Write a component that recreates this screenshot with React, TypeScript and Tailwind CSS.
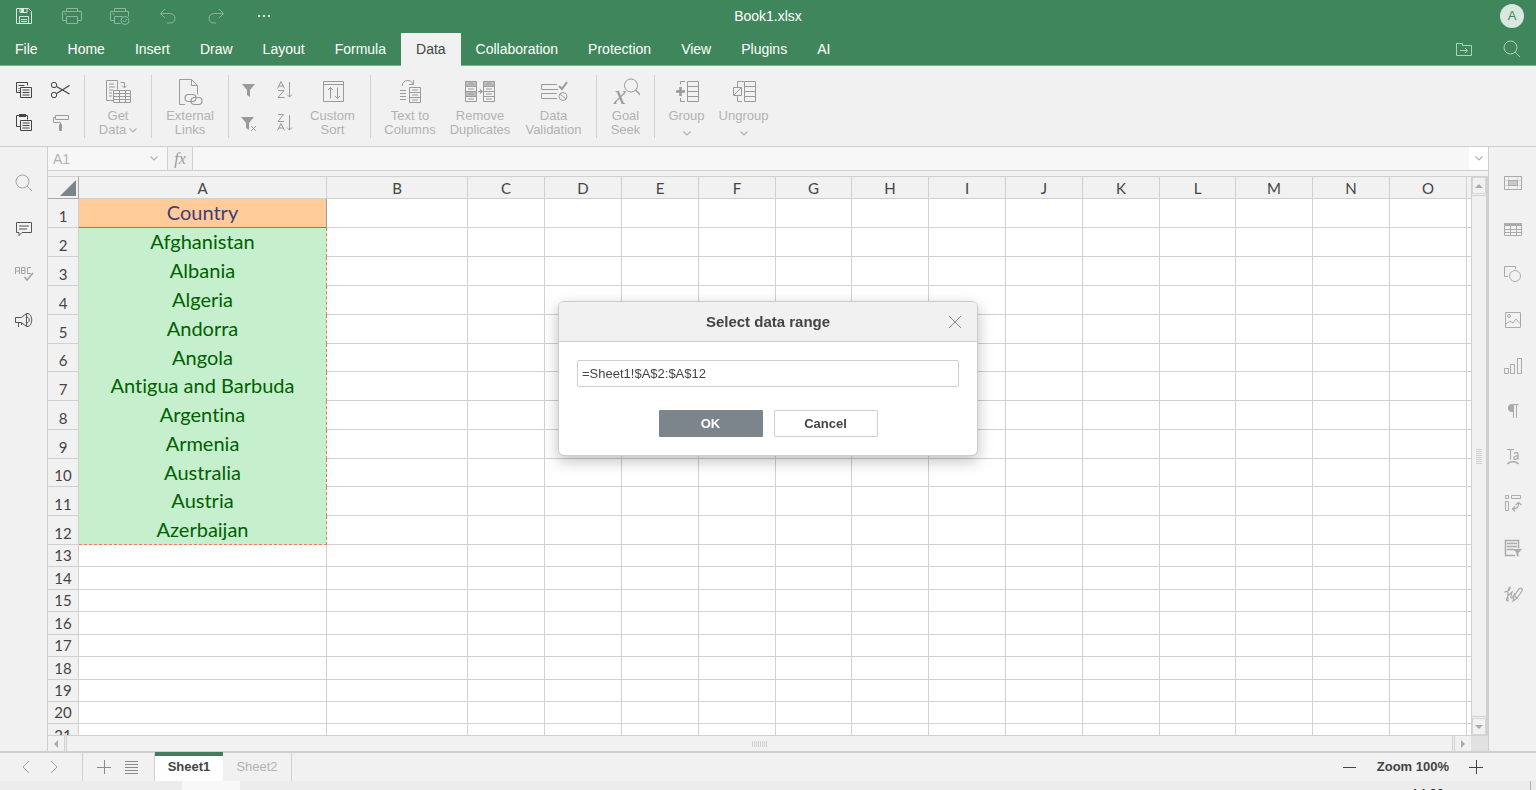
import type { ReactNode } from "react";

const menuTabs = ["File", "Home", "Insert", "Draw", "Layout", "Formula", "Data", "Collaboration", "Protection", "View", "Plugins", "AI"];

const columns = [
  { name: "A", width: "w-[248px]" },
  { name: "B", width: "w-[141px]" },
  { name: "C", width: "w-[77px]" },
  { name: "D", width: "w-[77px]" },
  { name: "E", width: "w-[77px]" },
  { name: "F", width: "w-[77px]" },
  { name: "G", width: "w-[76px]" },
  { name: "H", width: "w-[77px]" },
  { name: "I", width: "w-[77px]" },
  { name: "J", width: "w-[77px]" },
  { name: "K", width: "w-[77px]" },
  { name: "L", width: "w-[76px]" },
  { name: "M", width: "w-[77px]" },
  { name: "N", width: "w-[77px]" },
  { name: "O", width: "w-[77px]" },
];

const countries = [
  "Country", "Afghanistan", "Albania", "Algeria", "Andorra", "Angola",
  "Antigua and Barbuda", "Argentina", "Armenia", "Australia", "Austria", "Azerbaijan",
];

const rowHeights = [
  "h-[29px]", "h-[29px]", "h-[29px]", "h-[29px]", "h-[29px]", "h-[28px]",
  "h-[29px]", "h-[29px]", "h-[29px]", "h-[28px]", "h-[29px]", "h-[29px]",
  "h-[22px]", "h-[23px]", "h-[22px]", "h-[23px]", "h-[22px]", "h-[23px]", "h-[22px]", "h-[22px]", "h-[23px]",
];

function Icon({ w = 20, h = 20, children }: { w?: number; h?: number; children: ReactNode }) {
  return (
    <svg width={w} height={h} viewBox={`0 0 ${w} ${h}`} fill="none" stroke="currentColor" strokeWidth="1" aria-hidden="true" className="shrink-0">
      {children}
    </svg>
  );
}

const SaveIcon = () => (
  <Icon>
    <path d="M2.500 2.500h12l3 3v12h-15z" />
    <path d="M6 2.500v4h7v-4M5.500 17.500v-7h9v7M7 13.500h6M7 15.500h6" />
    <path d="M7 3h3v3H7z" fill="currentColor" stroke="none" />
  </Icon>
);

const PrintIcon = () => (
  <Icon>
    <path d="M4.500 5.500v-3h11v3M4.500 14.500h-4v-9h19v9h-4" />
    <path d="M4.500 10.500h11v7h-11zM2.500 8h2" />
  </Icon>
);

const QuickPrintIcon = () => (
  <Icon>
    <path d="M4.500 5.500v-3h11v3M4.500 14.500h-4v-9h18v5M4.500 10.500h8M10.500 17.500h-6v-7M2.500 8h2" />
    <circle cx="15" cy="14.500" r="4" />
    <path d="m13 14.500 1.500 1.500 2.500-3" />
  </Icon>
);

const UndoIcon = () => (
  <Icon>
    <path d="M7 3 2.500 7.500 7 12M3 7.500h8.500c3.500 0 5.500 2 5.500 5s-2 4.500-5 4.500H9" />
  </Icon>
);

const RedoIcon = () => (
  <Icon>
    <path d="m13 3 4.500 4.500L13 12m4-4.500H8.500C5 7.500 3 9.500 3 12.500S5 17 8 17h2" />
  </Icon>
);

const MoreIcon = () => (
  <Icon>
    <path d="M4 9h2v2H4zM9 9h2v2H9zM14 9h2v2h-2z" fill="currentColor" stroke="none" />
  </Icon>
);

const FolderIcon = () => (
  <Icon>
    <path d="M2.500 4.500h6v2h9v10h-15zM6 11.500h7.500M11 9l2.500 2.500L11 14" />
  </Icon>
);

const SearchIcon = () => (
  <Icon>
    <circle cx="8.500" cy="8.500" r="6.500" />
    <path d="m13 13 5 5" />
  </Icon>
);

const CopyIcon = () => (
  <Icon>
    <path d="M6 12.500H2.500v-10h11v3M4.500 5.500h6M4.500 8.500h1M4.500 10.500h1" />
    <path d="M6.500 7.500h11v10h-11zM8.500 10h7M8.500 12.500h7M8.500 15h7" />
  </Icon>
);

const PasteIcon = () => (
  <Icon>
    <path d="M6 13.500H2.500v-11h11v4" />
    <path d="M5 1h7v3H5z" fill="currentColor" stroke="none" />
    <path d="M6.500 7.500h11v10h-11zM8.500 10h7M8.500 12.500h7M8.500 15h7" />
  </Icon>
);

const CutIcon = () => (
  <Icon>
    <circle cx="4" cy="5" r="2.700" />
    <circle cx="4" cy="15" r="2.700" />
    <path d="M6.500 6.500 19.500 14M6.500 13.500 19.500 5.500" strokeWidth="1.200" />
  </Icon>
);

const FormatPainterIcon = () => (
  <Icon>
    <path d="M5.500 2.500h13v4h-13zM5.500 4.500h-2v5h7v3" />
    <path d="M9.500 11.500h2v6h-2z" fill="currentColor" />
  </Icon>
);

const FunnelIcon = () => (
  <Icon>
    <path d="M3 4h13l-5 6v7l-3-2v-5z" fill="currentColor" stroke="none" />
  </Icon>
);

const ClearFunnelIcon = () => (
  <Icon>
    <path d="M2 4h13l-5 6v7l-3-2v-5z" fill="currentColor" stroke="none" />
    <path d="m12 13 5 5m0-5-5 5" />
  </Icon>
);

const SortIcon = ({ desc = false }: { desc?: boolean }) => (
  <Icon>
    {desc ? (
      <path d="M3 1.500h5.500l-5.500 7h6M2.500 17.500l3.500-7 3.500 7M3.500 15h5" />
    ) : (
      <path d="m2.500 8.500 3.500-7 3.500 7M3.500 6h5M3 10.500h6l-6 7h6.500" />
    )}
    <path d="M14.500 2v15M12 14.500l2.500 2.500 2.500-2.500" />
  </Icon>
);

const GetDataIcon = () => (
  <Icon w={28} h={28}>
    <path d="M9 22.500H2.500v-20h11v9M5 6h5M5 9h6M5 12h4M5 15h3M5 18h3M16.500 4.500h4v5M18 7.500l2.500 2.500L23 7.500" />
    <path d="M9.500 12.500h17v12h-17zM9.500 15.500h17M9.500 18.500h17M9.500 21.500h17M15.500 12.500v12M21.500 12.500v12" />
  </Icon>
);

const LinksIcon = () => (
  <Icon w={28} h={28}>
    <path d="M9 26.500H3.500v-25h12l6 6v9M15.500 1.500v6h6" />
    <rect x="9" y="16.500" width="11" height="7" rx="3.500" strokeWidth="1.200" />
    <rect x="15" y="19.500" width="11" height="7" rx="3.500" strokeWidth="1.200" />
  </Icon>
);

const CustomSortIcon = () => (
  <Icon w={28} h={28}>
    <path d="M4.500 3.500h20v20h-20zM4.500 6.500h20M11.500 20.500v-11M9 12l2.500-2.500L14 12M18.500 9.500v11M16 18l2.500 2.500L21 18" />
  </Icon>
);

const TextColumnsIcon = () => (
  <Icon w={28} h={28}>
    <path d="M6 8c1-7 9-7 11-2M17.500 2v4.500H13" />
    <path d="M4 12.500h6M4 15.500h6M4 18.500h6M4 21.500h6" />
    <path d="M13.500 9.500h11v15h-11zM13.500 14.500h11M13.500 19.500h11M16 12h6M16 17h6M16 22h6" />
  </Icon>
);

const DuplicatesIcon = () => (
  <Icon w={30} h={28}>
    <path d="M.500 3.500h11v5H.500zM.500 13.500h11v5H.500zM18.500 3.500h11v5h-11z" fill="#bdbdbd" />
    <path d="M.500 8.500h11v5H.500zM.500 18.500h11v5H.500zM18.500 8.500h11v15h-11zM18.500 13.500h11M18.500 18.500h11M3 6h6M3 11h6M3 16h6M3 21h6M21 6h6M21 11h6M21 16h6M21 21h6" />
    <path d="M13 13.500h4M15 11.500l2 2-2 2" strokeWidth="1.200" />
  </Icon>
);

const ValidationIcon = () => (
  <Icon w={28} h={28}>
    <path d="M17 6.500H1.500v5H18M17 15.500H1.500v5H17" />
    <path d="m19 8 3 3 5-7" strokeWidth="2" />
    <circle cx="23" cy="18.500" r="4" />
    <path d="m20 16 6 5" />
  </Icon>
);

const GoalSeekIcon = () => (
  <Icon w={28} h={28}>
    <circle cx="19" cy="7.500" r="6.500" />
    <path d="m23.500 12 5 5" strokeWidth="1.500" />
    <text x="2" y="26" fontSize="27" fontStyle="italic" fontFamily="Liberation Serif" fill="currentColor" stroke="none">x</text>
  </Icon>
);

const GroupIcon = () => (
  <Icon w={28} h={28}>
    <path d="M14.500 3.500h11v20h-11zM14.500 8.500h11M14.500 13.500h11M14.500 18.500h11M12 3.500H7.500v3M7.500 20v3.500H12" />
    <path d="M3 13.500h9M7.500 9v9" strokeWidth="2.500" />
  </Icon>
);

const UngroupIcon = () => (
  <Icon w={28} h={28}>
    <path d="M14.500 3.500h11v20h-11zM14.500 8.500h11M14.500 13.500h11M14.500 18.500h11M14 3.500H7.500v5.500M7.500 18v5.500H12M3.500 9.500h8v8h-8zM4 17l7-7" />
  </Icon>
);

const Chevron = () => (
  <svg width="8" height="5" viewBox="0 0 8 5" fill="none" stroke="currentColor" strokeWidth="1.200" aria-hidden="true" className="shrink-0">
    <path d="m.500.500 3.500 3.500L7.500.500" />
  </svg>
);

const leftPanel = [
  { label: "Find", tone: "text-[#a3a3a3]", icon: <SearchIcon /> },
  {
    label: "Comments",
    tone: "text-[#555555]",
    icon: <Icon><path d="M2.500 3.500h15v10H8l-3 3v-3H2.500zM5 7h10M5 10h8" /></Icon>,
  },
  {
    label: "Spell checking",
    tone: "text-[#a3a3a3]",
    icon: (
      <Icon>
        <path d="M1.500 10V3.500h4V10M1.500 7h4M7.500 3.500h3.500v6H7.500zM7.500 6.500H11M17 3.500h-3.500v6H17" />
        <path d="m10.500 13 2.500 3 6-7" strokeWidth="1.500" />
      </Icon>
    ),
  },
  {
    label: "Feedback",
    tone: "text-[#555555]",
    icon: (
      <Icon>
        <path d="M1.500 7.500h6l5-4v13l-5-4h-6zM4.500 13v4M7.500 13v2M12.500 3.500c7-1 7 14 0 13M13 7c3 1 3 5 0 6" />
      </Icon>
    ),
  },
];

const rightPanel = [
  {
    label: "Cell settings",
    icon: (
      <Icon>
        <path d="M1.500 3.500h17v13h-17zM5.500 3.500v13M14.500 3.500v13M1.500 7.500h17M1.500 12.500h17" opacity=".4" />
        <path d="M1.500 3.500h17v13h-17z" />
        <path d="M5.500 7.500h9v5h-9z" fill="#c8c8c8" />
      </Icon>
    ),
  },
  {
    label: "Table settings",
    icon: (
      <Icon>
        <path d="M1.500 4.500h17v12h-17zM1.500 10.500h17M1.500 13.500h17M7.500 6v10.500M13.500 6v10.500" />
        <path d="M1 4h18v3H1z" fill="currentColor" stroke="none" />
      </Icon>
    ),
  },
  {
    label: "Shape settings",
    icon: <Icon><path d="M5 12.500H1.500v-10h11V5" /><circle cx="12" cy="12" r="5.500" /></Icon>,
  },
  {
    label: "Image settings",
    icon: <Icon><path d="M2.500 2.500h15v15h-15zM3 14l4-3 3 2 3-4 4 4.500" /><circle cx="6" cy="6" r="1.500" /></Icon>,
  },
  {
    label: "Chart settings",
    icon: <Icon><path d="M1.500 12.500h4v5h-4zM7.500 8.500h4v9h-4zM14.500 2.500h4v15h-4z" /></Icon>,
  },
  {
    label: "Paragraph settings",
    icon: (
      <Icon>
        <path d="M9 3.500h6.500M10.500 4v13M13.500 4v13" />
        <path d="M10.500 3v8H9C3.500 11 3.500 3 9 3z" fill="currentColor" stroke="none" />
      </Icon>
    ),
  },
  {
    label: "Text Art settings",
    icon: (
      <Icon>
        <path d="M4 2.500h7M7.500 2.500v10M11 6.500c2-1.500 4-1 4 1v5M15 9c-6-.500-5 5-1.500 3l1.500-1.500" strokeWidth="1.200" />
        <path d="M4.500 17c2-3 9-3 11 0" strokeWidth="1.500" />
      </Icon>
    ),
  },
  {
    label: "Pivot table settings",
    icon: (
      <Icon>
        <path d="M2.500 2.500h3v3h-3zM8.500 2.500h9v3h-9zM2.500 8.500h3v9h-3z" />
        <path d="M9.500 16c5 0 6-2 6-6M12.500 12l3-2.500 3 2.500M12 13.500 9.500 16l2.500 2.500" strokeWidth="1.200" />
      </Icon>
    ),
  },
  {
    label: "Slicer settings",
    icon: (
      <Icon>
        <path d="M12 17.500H2.500v-15h13v8M4 5.500h10M4 8.500h10M4 11.500h7" strokeWidth="1.500" />
        <path d="M10 11h9l-3.500 4v4l-2-1.500V15z" fill="currentColor" stroke="none" />
      </Icon>
    ),
  },
  {
    label: "Signature settings",
    icon: (
      <Icon>
        <path d="M1 8c4 0 7-3 6-5-3 0-2 14-2 14-3 0-2-4 4-9-1 4-2 7 0 6 1-1 2-3 3-5" strokeWidth="1.200" />
        <path d="m10 17 1-5 5-7c2-2 4 0 3 2l-5 7zM12 12l2 2" strokeWidth="1.200" />
      </Icon>
    ),
  },
];

function RibbonButton({ icon, lines, width, menu }: { icon: ReactNode; lines: string[]; width: string; menu?: "inline" | "below" }) {
  return (
    <button type="button" className={`${width} flex flex-col items-center text-[13px] leading-[14px] text-[#b2b2b2]`}>
      <span className="flex h-[34px] items-center text-[#9a9a9a]">{icon}</span>
      {lines.map((line, i) => (
        <span key={line} className="flex items-center gap-[3px] whitespace-nowrap">
          {line}
          {menu === "inline" && i === lines.length - 1 && <Chevron />}
        </span>
      ))}
      {menu === "below" && <span className="flex h-[14px] items-end pb-px"><Chevron /></span>}
    </button>
  );
}

function SmallButton({ label, tone, children }: { label: string; tone: string; children: ReactNode }) {
  return (
    <button type="button" aria-label={label} className={`flex size-5 items-center justify-center ${tone}`}>
      {children}
    </button>
  );
}

const Separator = () => <div className="h-[63px] w-px shrink-0 bg-[#d2d2d2]" />;

function TitleBar() {
  return (
    <div className="grid h-[33px] grid-cols-[1fr_auto_1fr] items-center pb-0.5 text-white">
      <div className="flex gap-7 pl-[14px]">
        <button type="button" aria-label="Save" className="opacity-80"><SaveIcon /></button>
        <button type="button" aria-label="Print" className="opacity-40"><PrintIcon /></button>
        <button type="button" aria-label="Quick print" className="opacity-40"><QuickPrintIcon /></button>
        <button type="button" aria-label="Undo" className="opacity-40"><UndoIcon /></button>
        <button type="button" aria-label="Redo" className="opacity-40"><RedoIcon /></button>
        <button type="button" aria-label="Customize quick access" className="opacity-80"><MoreIcon /></button>
      </div>
      <h1 className="text-sm">Book1.xlsx</h1>
      <div className="flex justify-end pr-3">
        <span className="flex size-6 items-center justify-center rounded-full bg-[#d9e7df] text-[13px] text-[#40865c]">A</span>
      </div>
    </div>
  );
}

function MenuBar() {
  return (
    <div className="flex h-[33px] items-stretch justify-between border-b border-[#7fb093] text-white">
      <nav className="flex">
        {menuTabs.map((tab) => (
          <button
            key={tab}
            type="button"
            className={tab === "Data" ? "-mb-px bg-[#f1f1f1] px-[15px] pb-0.5 text-sm text-[#444444]" : "px-[15px] pb-px text-sm"}
          >
            {tab}
          </button>
        ))}
      </nav>
      <div className="flex items-center gap-7 pr-[14px] opacity-60">
        <button type="button" aria-label="Open file location"><FolderIcon /></button>
        <button type="button" aria-label="Search"><SearchIcon /></button>
      </div>
    </div>
  );
}

function Ribbon() {
  return (
    <div className="flex h-[81px] items-center border-b border-[#cfcfcf]">
      <div className="grid w-[84px] grid-cols-2 gap-x-4 gap-y-[13px] pr-[14px] pl-[14px]">
        <SmallButton label="Copy" tone="text-[#444444]"><CopyIcon /></SmallButton>
        <SmallButton label="Cut" tone="text-[#444444]"><CutIcon /></SmallButton>
        <SmallButton label="Paste" tone="text-[#444444]"><PasteIcon /></SmallButton>
        <SmallButton label="Copy style" tone="text-[#9a9a9a]"><FormatPainterIcon /></SmallButton>
      </div>
      <Separator />
      <RibbonButton icon={<GetDataIcon />} lines={["Get", "Data"]} width="w-[66px]" menu="inline" />
      <Separator />
      <RibbonButton icon={<LinksIcon />} lines={["External", "Links"]} width="w-[76px]" />
      <Separator />
      <div className="grid grid-cols-2 gap-x-4 gap-y-[13px] pl-[10px]">
        <SmallButton label="Filter" tone="text-[#9a9a9a]"><FunnelIcon /></SmallButton>
        <SmallButton label="Sort ascending" tone="text-[#9a9a9a]"><SortIcon /></SmallButton>
        <SmallButton label="Clear filter" tone="text-[#9a9a9a]"><ClearFunnelIcon /></SmallButton>
        <SmallButton label="Sort descending" tone="text-[#9a9a9a]"><SortIcon desc /></SmallButton>
      </div>
      <RibbonButton icon={<CustomSortIcon />} lines={["Custom", "Sort"]} width="w-[75px]" />
      <Separator />
      <RibbonButton icon={<TextColumnsIcon />} lines={["Text to", "Columns"]} width="w-[78px]" />
      <RibbonButton icon={<DuplicatesIcon />} lines={["Remove", "Duplicates"]} width="w-[62px]" />
      <RibbonButton icon={<ValidationIcon />} lines={["Data", "Validation"]} width="w-[85px]" />
      <Separator />
      <RibbonButton icon={<GoalSeekIcon />} lines={["Goal", "Seek"]} width="w-[57px]" />
      <Separator />
      <RibbonButton icon={<GroupIcon />} lines={["Group"]} width="w-[63px]" menu="below" />
      <RibbonButton icon={<UngroupIcon />} lines={["Ungroup"]} width="w-[51px]" menu="below" />
    </div>
  );
}

function FormulaBar() {
  return (
    <div className="flex h-6 border-b border-[#d0d0d0] bg-[#f7f7f7] text-[#b2b2b2]">
      <div className="flex w-[119px] items-center justify-between pr-[9px]">
        <input aria-label="Name box" defaultValue="A1" className="w-24 bg-transparent pl-[5px] text-sm outline-none" />
        <Chevron />
      </div>
      <button type="button" className="w-[26px] border-x border-[#d0d0d0] bg-[#f1f1f1] font-['Liberation_Serif'] text-base leading-5 text-[#9a9a9a] italic">
        fx
      </button>
      <input aria-label="Formula" className="min-w-0 flex-1 bg-transparent px-2 text-sm outline-none" />
      <button type="button" aria-label="Expand formula bar" className="flex w-[19px] items-center justify-center bg-white">
        <Chevron />
      </button>
    </div>
  );
}

function cellStyle(row: number, col: number) {
  if (col === 0 && row === 0) return "border-r border-b border-r-[#9c9c9c] border-b-[#d0603f] bg-[#ffcb99] text-[#3f3f76]";
  if (col === 0 && row < 11) return "border-r border-dashed border-[#ff6f61] bg-[#c6efce] text-[#006100]";
  if (col === 0 && row === 11) return "border-r border-b border-dashed border-[#ff6f61] bg-[#c6efce] text-[#006100]";
  if (col === columns.length) return "border-b border-[#d0d0d0]";
  return "border-r border-b border-[#d0d0d0]";
}

function Grid() {
  return (
    <div className="min-w-0 flex-1 overflow-hidden bg-white font-[Lato,sans-serif] [font-variant-ligatures:none]">
      <table className="w-full table-fixed border-separate border-spacing-0">
        <colgroup>
          <col className="w-[31px]" />
          {columns.map((c) => <col key={c.name} className={c.width} />)}
          <col />
        </colgroup>
        <thead>
          <tr className="h-[23px] bg-[#f1f1f1] text-[15px] leading-5 text-[#444444]">
            <th className="border-t border-r border-b border-[#a8a8a8] border-t-[#d0d0d0] p-0">
              <svg width="17" height="16" viewBox="0 0 17 16" className="ml-3" aria-label="Select all">
                <path d="M16 0v16H0z" fill="#7d858c" />
              </svg>
            </th>
            {columns.map((c) => (
              <th key={c.name} className="border-t border-r border-b border-[#d0d0d0] p-0 font-normal">{c.name}</th>
            ))}
            <th className="border-t border-b border-[#d0d0d0] p-0" />
          </tr>
        </thead>
        <tbody>
          {rowHeights.map((height, row) => (
            <tr key={row} className={height}>
              <th className="border-r border-b border-[#d0d0d0] bg-[#f1f1f1] p-0 pb-px align-bottom text-[15px] leading-5 font-normal text-[#444444]">
                {row + 1}
              </th>
              {[...columns, null].map((_, col) => (
                <td
                  key={col}
                  className={`overflow-hidden p-0 text-center text-xl leading-6 ${row < 12 ? "pb-[3px]" : ""} ${cellStyle(row, col)}`}
                >
                  {col === 0 ? countries[row] : null}
                </td>
              ))}
            </tr>
          ))}
        </tbody>
      </table>
    </div>
  );
}

const Arrow = ({ d }: { d: string }) => (
  <svg width="8" height="8" viewBox="0 0 8 8" fill="#ababab" aria-hidden="true"><path d={d} /></svg>
);

function VerticalScroll() {
  return (
    <div className="flex w-[17px] flex-col gap-px border-t border-r-2 border-l border-[#d0d0d0] bg-[#f1f1f1]">
      <button type="button" aria-label="Scroll up" className="flex h-[17px] items-center justify-center border border-[#d6d6d6]">
        <Arrow d="M0 6h8L4 2z" />
      </button>
      <div className="flex flex-1 flex-col items-center justify-center gap-px border-y border-[#d0d0d0]">
        {Array.from({ length: 8 }, (_, i) => <span key={i} className="h-px w-[6px] bg-[#cfcfcf]" />)}
      </div>
      <button type="button" aria-label="Scroll down" className="flex h-[17px] items-center justify-center border border-[#d6d6d6]">
        <Arrow d="M0 2h8L4 6z" />
      </button>
    </div>
  );
}

function HorizontalScroll() {
  return (
    <div className="flex h-4 shrink-0 border-t border-[#d0d0d0] bg-[#f1f1f1]">
      <button type="button" aria-label="Scroll left" className="flex w-[17px] items-center justify-center border-r border-[#d0d0d0]">
        <Arrow d="M6 0v8L2 4z" />
      </button>
      <div className="ml-px flex flex-1 items-center justify-center gap-px border-x border-[#d0d0d0]">
        {Array.from({ length: 8 }, (_, i) => <span key={i} className="h-[6px] w-px bg-[#cfcfcf]" />)}
      </div>
      <button type="button" aria-label="Scroll right" className="ml-px flex w-[17px] items-center justify-center border-l border-[#d0d0d0]">
        <Arrow d="M2 0v8l4-4z" />
      </button>
      <div className="w-[17px] bg-[#e1e1e1]" />
    </div>
  );
}

function StatusBar() {
  return (
    <footer className="flex h-[30px] shrink-0 items-stretch border-t-2 border-[#d0d0d0] text-[13px] text-[#444444]">
      <div className="flex w-[82px] items-center gap-2 pl-4 text-[#a0a0a0]">
        <button type="button" aria-label="Previous sheet"><Icon><path d="m13 4-6 6 6 6" /></Icon></button>
        <button type="button" aria-label="Next sheet"><Icon><path d="m7 4 6 6-6 6" /></Icon></button>
      </div>
      <div className="flex w-[73px] items-center gap-2 border-x border-[#d0d0d0] pl-[11px] text-[#8a8a8a]">
        <button type="button" aria-label="Add sheet"><Icon><path d="M3 10.500h14M10.500 3v14" /></Icon></button>
        <button type="button" aria-label="List of sheets"><Icon><path d="M3 4.500h13M3 7.500h13M3 10.500h13M3 13.500h13M3 16.500h13" /></Icon></button>
      </div>
      <button type="button" className="-mt-px w-[68px] border-t-4 border-[#457b5c] bg-white pb-1 font-bold">Sheet1</button>
      <button type="button" className="w-[69px] border-r border-[#d0d0d0] text-[#b2b2b2]">Sheet2</button>
      <div className="ml-auto flex items-center gap-[17px] pr-[50px]">
        <button type="button" aria-label="Zoom out"><Icon><path d="M3 10.500h13" /></Icon></button>
        <span className="font-bold">Zoom 100%</span>
        <button type="button" aria-label="Zoom in"><Icon><path d="M3 10.500h14M10.500 3v14" /></Icon></button>
      </div>
    </footer>
  );
}

function RangeDialog() {
  return (
    <div className="fixed inset-0 flex items-center justify-center pb-[33px]">
      <div
        role="dialog"
        aria-labelledby="range-title"
        className="w-[420px] overflow-hidden rounded-md border border-[#cbcbcb] bg-white text-[#444444] shadow-[0_5px_15px_rgba(0,0,0,0.25)]"
      >
        <div className="grid h-10 grid-cols-[1fr_auto_1fr] items-center border-b border-[#cbcbcb] bg-[#f1f1f1] px-3">
          <h2 id="range-title" className="col-start-2 pt-px text-[15px] font-bold">Select data range</h2>
          <button type="button" aria-label="Close" className="justify-self-end text-[#8a8a8a]">
            <Icon><path d="m4 4 12 12M16 4 4 16" /></Icon>
          </button>
        </div>
        <div className="px-[18px] pt-[18px] pb-[18px]">
          <input
            aria-label="Data range"
            defaultValue="=Sheet1!$A$2:$A$12"
            className="block h-[27px] w-full rounded-xs border border-[#cfcfcf] px-1 pb-px text-[13px] outline-none"
          />
          <div className="mt-[23px] flex justify-center gap-[11px] text-[13px] font-bold">
            <button type="button" className="h-[27px] w-[104px] rounded-[1px] bg-[#7d858c] text-white">OK</button>
            <button type="button" className="h-[27px] w-[104px] rounded-[1px] border border-[#cfcfcf] bg-white">Cancel</button>
          </div>
        </div>
      </div>
    </div>
  );
}

export default function App() {
  return (
    <div className="flex h-screen flex-col overflow-hidden bg-[#f1f1f1] font-['Liberation_Sans',Arial,sans-serif]">
      <header className="shrink-0">
        <div className="bg-[#40865c]">
          <TitleBar />
          <MenuBar />
        </div>
        <Ribbon />
      </header>

      <div className="flex min-h-0 flex-1">
        <aside className="w-12 shrink-0 border-r border-[#cfcfcf] pt-[26px]">
          <div className="flex h-[157px] flex-col items-center justify-between">
            {leftPanel.map((item) => (
              <button key={item.label} type="button" aria-label={item.label} className={item.tone}>
                {item.icon}
              </button>
            ))}
          </div>
        </aside>

        <main className="flex min-w-0 flex-1 flex-col">
          <FormulaBar />
          <div className="mt-[5px] flex min-h-0 flex-1">
            <Grid />
            <VerticalScroll />
          </div>
          <HorizontalScroll />
        </main>

        <aside className="w-12 shrink-0 border-l border-[#cfcfcf] pt-[26px] text-[#ababab]">
          <div className="flex h-[431px] flex-col items-center justify-between">
            {rightPanel.map((item) => (
              <button key={item.label} type="button" aria-label={item.label}>
                {item.icon}
              </button>
            ))}
          </div>
        </aside>
      </div>

      <StatusBar />

      {/* top edge of the desktop taskbar */}
      <div className="flex h-[9px] shrink-0 items-start justify-between overflow-hidden bg-[#ececec] pr-[5px] pl-[182px]">
        <div className="h-full w-[58px] bg-[#f8f8f8]" />
        <div className="flex gap-[86px]">
          <span className="pt-[3px] text-[13px] text-[#222222]">14:00</span>
          <span className="h-[9px] w-px bg-[#b0b0b0]" />
        </div>
      </div>

      <RangeDialog />
    </div>
  );
}
